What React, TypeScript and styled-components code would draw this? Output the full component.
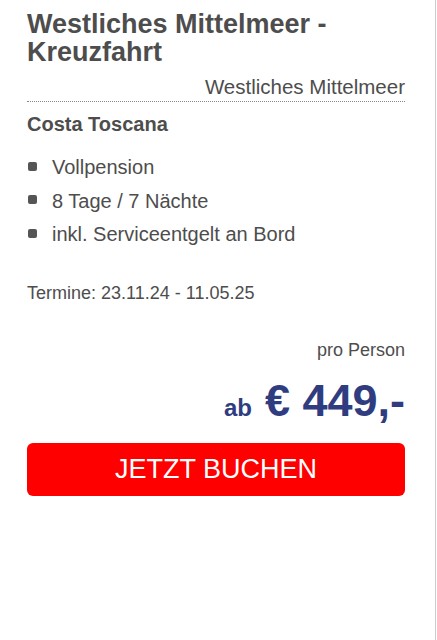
import React from "react";
import styled, { createGlobalStyle } from "styled-components";

const GlobalStyle = createGlobalStyle`
  html, body {
    margin: 0;
    padding: 0;
    background: #fdfdfd;
  }
  body {
    font-family: "Liberation Sans", Arial, sans-serif;
    color: #4d4d4d;
  }
`;

const Card = styled.div`
  box-sizing: border-box;
  width: 436px;
  min-height: 640px;
  background: #ffffff;
  border-right: 1px solid #cccccc;
  padding: 10px 30px 0 27px;
`;

const Title = styled.h2`
  margin: 0;
  font-size: 27px;
  line-height: 28px;
  font-weight: bold;
  color: #4d4d4d;
`;

const Region = styled.div`
  margin-top: 9px;
  padding-bottom: 2px;
  text-align: right;
  font-size: 20.5px;
  line-height: 24px;
  border-bottom: 1px dotted #888888;
`;

const Ship = styled.h3`
  margin: 10px 0 0;
  font-size: 20px;
  line-height: 24px;
  font-weight: bold;
`;

const Features = styled.ul`
  list-style: none;
  margin: 17px 0 0;
  padding: 0;
`;

const Feature = styled.li`
  display: flex;
  align-items: center;
  gap: 15px;
  font-size: 20px;
  line-height: 28px;
  margin-bottom: 5.5px;

  &::before {
    content: "";
    flex: none;
    width: 9px;
    height: 9px;
    margin-left: 1px;
    margin-top: -2px;
    border-radius: 2px;
    background: #555555;
  }
`;

const Dates = styled.p`
  margin: 34px 0 0;
  font-size: 18px;
  line-height: 22px;
`;

const PerPerson = styled.div`
  margin-top: 35px;
  text-align: right;
  font-size: 18px;
  line-height: 22px;
`;

const Price = styled.div`
  margin-top: 20px;
  text-align: right;
  font-weight: bold;
  color: #2f3d80;
  line-height: 40px;
`;

const From = styled.span`
  font-size: 24px;
  margin-right: 13px;
`;

const Amount = styled.span`
  font-size: 45px;
`;

const BookButton = styled.button`
  display: block;
  width: 100%;
  height: 53px;
  margin-top: 12px;
  border: none;
  border-radius: 6px;
  background: #ff0000;
  color: #ffffff;
  font-family: "Liberation Sans", Arial, sans-serif;
  font-size: 27px;
  cursor: pointer;
`;

const features = [
  "Vollpension",
  "8 Tage / 7 Nächte",
  "inkl. Serviceentgelt an Bord",
];

const App: React.FC = () => {
  return (
    <>
      <GlobalStyle />
      <Card>
        <Title>Westliches Mittelmeer - Kreuzfahrt</Title>
        <Region>Westliches Mittelmeer</Region>
        <Ship>Costa Toscana</Ship>
        <Features>
          {features.map((f) => (
            <Feature key={f}>{f}</Feature>
          ))}
        </Features>
        <Dates>Termine: 23.11.24 - 11.05.25</Dates>
        <PerPerson>pro Person</PerPerson>
        <Price>
          <From>ab</From>
          <Amount>€ 449,-</Amount>
        </Price>
        <BookButton>JETZT BUCHEN</BookButton>
      </Card>
    </>
  );
};

export default App;
